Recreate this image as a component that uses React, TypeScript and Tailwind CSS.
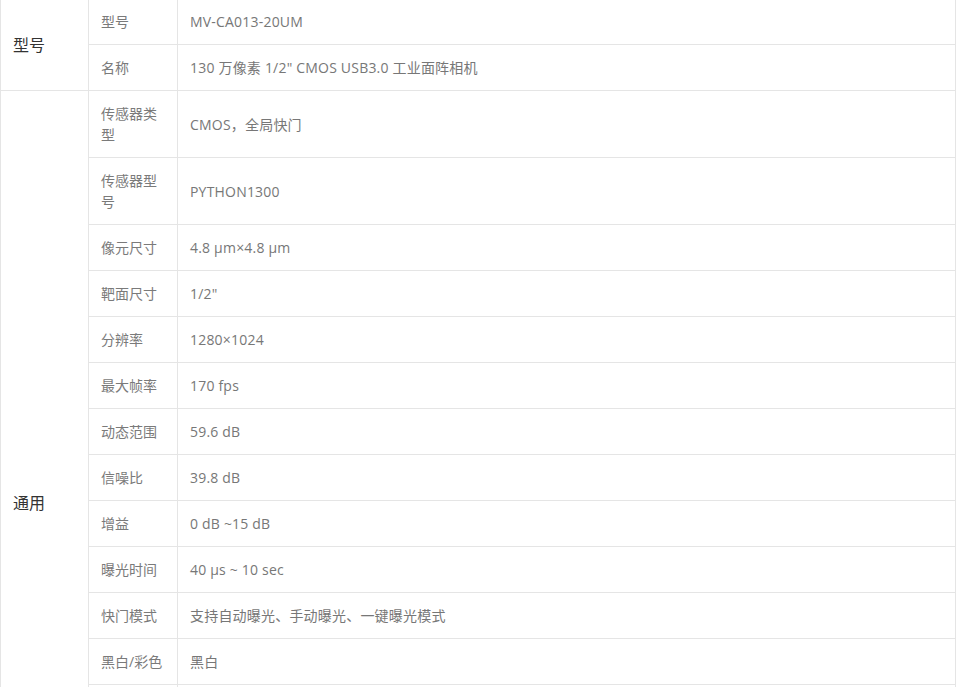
const rows: [string, string][] = [
  ["传感器类型", "CMOS，全局快门"],
  ["传感器型号", "PYTHON1300"],
  ["像元尺寸", "4.8 µm×4.8 µm"],
  ["靶面尺寸", "1/2\""],
  ["分辨率", "1280×1024"],
  ["最大帧率", "170 fps"],
  ["动态范围", "59.6 dB"],
  ["信噪比", "39.8 dB"],
  ["增益", "0 dB ~15 dB"],
  ["曝光时间", "40 µs ~ 10 sec"],
  ["快门模式", "支持自动曝光、手动曝光、一键曝光模式"],
  ["黑白/彩色", "黑白"],
  ["像素格式", "Mono 8/10/10p/12/12p"],
  ["Binning", "不支持"],
  ["下采样", "支持 1×1、1×2、2×1、2×2"],
  ["镜像", "支持水平镜像"],
  ["图像缓存", "128 MB"],
]

const font = "font-['Open_Sans','Noto_Sans_CJK_SC',sans-serif]"

function Label({ children }: { children: React.ReactNode }) {
  return (
    <td className="w-[89px] border border-[#e5e5e5] px-3 py-3 align-middle text-[14px] leading-[21px] text-[#7a7a7a]">
      {children}
    </td>
  )
}

function Value({ children }: { children: React.ReactNode }) {
  return (
    <td className="border border-[#e5e5e5] px-3 py-3 align-middle text-[14px] leading-[21px] tracking-[0.2px] text-[#777]">
      {children}
    </td>
  )
}

export default function App() {
  return (
    <div className={`min-h-screen bg-white ${font}`}>
      <table className="-mt-[2px] w-[956px] table-fixed border-collapse">
        <colgroup>
          <col className="w-[88px]" />
          <col className="w-[89px]" />
          <col />
        </colgroup>
        <tbody>
          {/* 型号 */}
          <tr>
            <td rowSpan={2} className="border border-[#e5e5e5] px-3 align-middle text-[16px] leading-6 text-[#333]">
              型号
            </td>
            <Label>型号</Label>
            <Value>MV-CA013-20UM</Value>
          </tr>
          <tr>
            <Label>名称</Label>
            <Value>130 万像素 1/2" CMOS USB3.0 工业面阵相机</Value>
          </tr>

          {/* 通用 */}
          {rows.map(([k, v], i) => (
            <tr key={k}>
              {i === 0 && (
                <td rowSpan={rows.length} className="border border-[#e5e5e5] px-3 align-middle text-[16px] leading-6 text-[#333]">
                  通用
                </td>
              )}
              <Label>{k}</Label>
              <Value>{v}</Value>
            </tr>
          ))}
        </tbody>
      </table>
    </div>
  )
}
